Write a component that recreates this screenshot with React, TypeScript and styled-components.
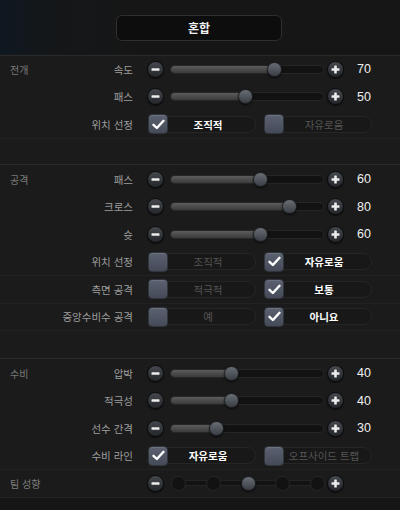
import React from 'react'
import styled, { createGlobalStyle } from 'styled-components'

const GlobalStyle = createGlobalStyle`
  html, body {
    margin: 0;
    padding: 0;
    background: #1a1a1a;
  }
  body {
    font-family: 'Liberation Sans', 'Noto Sans CJK KR', sans-serif;
  }
`

const Page = styled.div`
  width: 400px;
  height: 510px;
  background: #1b1b1b;
  display: flex;
  flex-direction: column;
  overflow: hidden;
`

const Header = styled.div`
  height: 55px;
  flex: none;
  display: flex;
  align-items: center;
  justify-content: center;
  background: linear-gradient(90deg, #0f1821 0%, #141719 12%, #161616 35%);
  border-bottom: 1px solid #2a2a2a;
`

const ModeButton = styled.div`
  width: 164px;
  height: 24px;
  margin-left: -2px;
  display: flex;
  align-items: center;
  justify-content: center;
  background: #0d0d0d;
  border: 1px solid #2f2f2f;
  border-radius: 6px;
  color: #f2f2f2;
  font-size: 12px;
  font-weight: 700;
`

const Section = styled.div<{ $line?: boolean; $gap?: number }>`
  flex: none;
  border-top: ${(p) => (p.$line ? '1px solid #2a2a2a' : 'none')};
  padding-top: ${(p) => (p.$line ? 1 : 0)}px;
  padding-bottom: ${(p) => p.$gap ?? 0}px;
`

const Row = styled.div<{ $lined?: boolean }>`
  height: 27.5px;
  box-sizing: border-box;
  display: grid;
  grid-template-columns: 133px 1fr;
  align-items: center;
  border-bottom: 1px solid ${(p) => (p.$lined ? '#222222' : 'transparent')};
`

const LabelCell = styled.div`
  display: flex;
  justify-content: space-between;
  align-items: center;
  padding-left: 10px;
  white-space: nowrap;
  min-width: 0;
`

const SectionLabel = styled.span`
  color: #7c7c7c;
  font-size: 10px;
`

const RowLabel = styled.span`
  color: #9d9d9d;
  font-size: 10.5px;
  margin-left: auto;
`

const Controls = styled.div`
  display: flex;
  align-items: center;
  padding-left: 14px;
`

const RoundButton = styled.div`
  width: 17px;
  height: 17px;
  flex: none;
  border-radius: 50%;
  display: flex;
  align-items: center;
  justify-content: center;
  background: linear-gradient(#44484e, #23262a);
  border: 1px solid #0b0b0b;
  box-sizing: border-box;
  box-shadow: 0 1px 1px rgba(0, 0, 0, 0.6);
`

const Track = styled.div`
  position: relative;
  width: 152px;
  height: 7px;
  margin: 0 4px 0 7px;
  border-radius: 4px;
  background: #121212;
  box-shadow: 0 0 0 1px #262626;
`

const Fill = styled.div<{ $value: number }>`
  width: ${(p) => 2 + p.$value * 1.45}px;
  height: 100%;
  border-radius: 4px;
  background: linear-gradient(#5c5c5c, #3b3b3b);
`

const Knob = styled.div<{ $value: number }>`
  position: absolute;
  top: 50%;
  left: ${(p) => 2 + p.$value * 1.45 - 7.5}px;
  width: 15px;
  height: 15px;
  margin-top: -7.5px;
  border-radius: 50%;
  box-sizing: border-box;
  background: linear-gradient(#686d74, #3a3e44);
  border: 1px solid #1c1e21;
  box-shadow: 0 1px 2px rgba(0, 0, 0, 0.7);
`

const Value = styled.span`
  margin-left: 13px;
  color: #f0f0f0;
  font-size: 12.5px;
  font-weight: 500;
`

const Options = styled.div`
  display: flex;
  gap: 8px;
  padding-left: 1px;
`

const Option = styled.div<{ $on: boolean }>`
  position: relative;
  width: 108px;
  height: 17px;
  box-sizing: border-box;
  padding: 0 8px 0 20px;
  display: flex;
  align-items: center;
  justify-content: center;
  border-radius: 9px;
  border: 1px solid #262626;
  background: #181818;
  color: ${(p) => (p.$on ? '#ffffff' : '#555555')};
  font-size: 10.5px;
  font-weight: ${(p) => (p.$on ? 700 : 400)};
`

const CheckBox = styled.div`
  position: absolute;
  left: -1px;
  top: -2.5px;
  width: 20px;
  height: 20px;
  box-sizing: border-box;
  border-radius: 4px;
  display: flex;
  align-items: center;
  justify-content: center;
  background: linear-gradient(#5b6171, #454a58);
  border: 1px solid #30343c;
  box-shadow: inset 0 1px 1px rgba(255, 255, 255, 0.12);
`

const Steps = styled.div`
  position: relative;
  width: 154px;
  margin: 0 2px 0 7px;
  display: flex;
  justify-content: space-between;
  align-items: center;
`

const StepLine = styled.div`
  position: absolute;
  left: 6px;
  right: 6px;
  top: 50%;
  height: 4px;
  margin-top: -2px;
  background: #121212;
  box-shadow: 0 0 0 1px #242424;
`

const StepDot = styled.div<{ $active?: boolean }>`
  position: relative;
  width: 15px;
  height: 15px;
  border-radius: 50%;
  box-sizing: border-box;
  background: ${(p) => (p.$active ? 'linear-gradient(#686d74, #3a3e44)' : '#121212')};
  border: 1px solid ${(p) => (p.$active ? '#1c1e21' : '#262626')};
  box-shadow: ${(p) => (p.$active ? '0 1px 2px rgba(0,0,0,0.7)' : 'none')};
`

const Footer = styled.div`
  flex: 1;
  background: #161616;
`

function Minus() {
  return (
    <RoundButton>
      <svg width="9" height="9" viewBox="0 0 9 9">
        <rect x="0.5" y="3.2" width="8" height="2.6" rx="0.6" fill="#ececec" />
      </svg>
    </RoundButton>
  )
}

function Plus() {
  return (
    <RoundButton>
      <svg width="9" height="9" viewBox="0 0 9 9">
        <rect x="0.5" y="3.2" width="8" height="2.6" rx="0.6" fill="#ececec" />
        <rect x="3.2" y="0.5" width="2.6" height="8" rx="0.6" fill="#ececec" />
      </svg>
    </RoundButton>
  )
}

function Check() {
  return (
    <svg width="13" height="11" viewBox="0 0 13 11">
      <path d="M1.5 5.8 L4.9 9 L11.5 1.8" fill="none" stroke="#ffffff" strokeWidth="2.4" strokeLinecap="round" strokeLinejoin="round" />
    </svg>
  )
}

type SliderRowProps = { section?: string; label: string; value: number }

function SliderRow({ section, label, value }: SliderRowProps) {
  return (
    <Row>
      <LabelCell>
        {section && <SectionLabel>{section}</SectionLabel>}
        <RowLabel>{label}</RowLabel>
      </LabelCell>
      <Controls>
        <Minus />
        <Track>
          <Fill $value={value} />
          <Knob $value={value} />
        </Track>
        <Plus />
        <Value>{value}</Value>
      </Controls>
    </Row>
  )
}

type ChoiceRowProps = { label: string; left: string; right: string; picked: 0 | 1 }

function ChoiceRow({ label, left, right, picked }: ChoiceRowProps) {
  return (
    <Row $lined>
      <LabelCell>
        <RowLabel>{label}</RowLabel>
      </LabelCell>
      <Controls>
        <Options>
          <Option $on={picked === 0}>
            <CheckBox>{picked === 0 && <Check />}</CheckBox>
            {left}
          </Option>
          <Option $on={picked === 1}>
            <CheckBox>{picked === 1 && <Check />}</CheckBox>
            {right}
          </Option>
        </Options>
      </Controls>
    </Row>
  )
}

export default function App() {
  return (
    <Page>
      <GlobalStyle />
      <Header>
        <ModeButton>혼합</ModeButton>
      </Header>

      <Section $gap={25.5}>
        <SliderRow section="전개" label="속도" value={70} />
        <SliderRow label="패스" value={50} />
        <ChoiceRow label="위치 선정" left="조직적" right="자유로움" picked={0} />
      </Section>

      <Section $line $gap={27}>
        <SliderRow section="공격" label="패스" value={60} />
        <SliderRow label="크로스" value={80} />
        <SliderRow label="슛" value={60} />
        <ChoiceRow label="위치 선정" left="조직적" right="자유로움" picked={1} />
        <ChoiceRow label="측면 공격" left="적극적" right="보통" picked={1} />
        <ChoiceRow label="중앙수비수 공격" left="예" right="아니요" picked={1} />
      </Section>

      <Section $line>
        <SliderRow section="수비" label="압박" value={40} />
        <SliderRow label="적극성" value={40} />
        <SliderRow label="선수 간격" value={30} />
        <ChoiceRow label="수비 라인" left="자유로움" right="오프사이드 트랩" picked={0} />
        <Row $lined>
          <LabelCell>
            <SectionLabel>팀 성향</SectionLabel>
          </LabelCell>
          <Controls>
            <Minus />
            <Steps>
              <StepLine />
              <StepDot />
              <StepDot />
              <StepDot $active />
              <StepDot />
              <StepDot />
            </Steps>
            <Plus />
          </Controls>
        </Row>
      </Section>
      <Footer />
    </Page>
  )
}
